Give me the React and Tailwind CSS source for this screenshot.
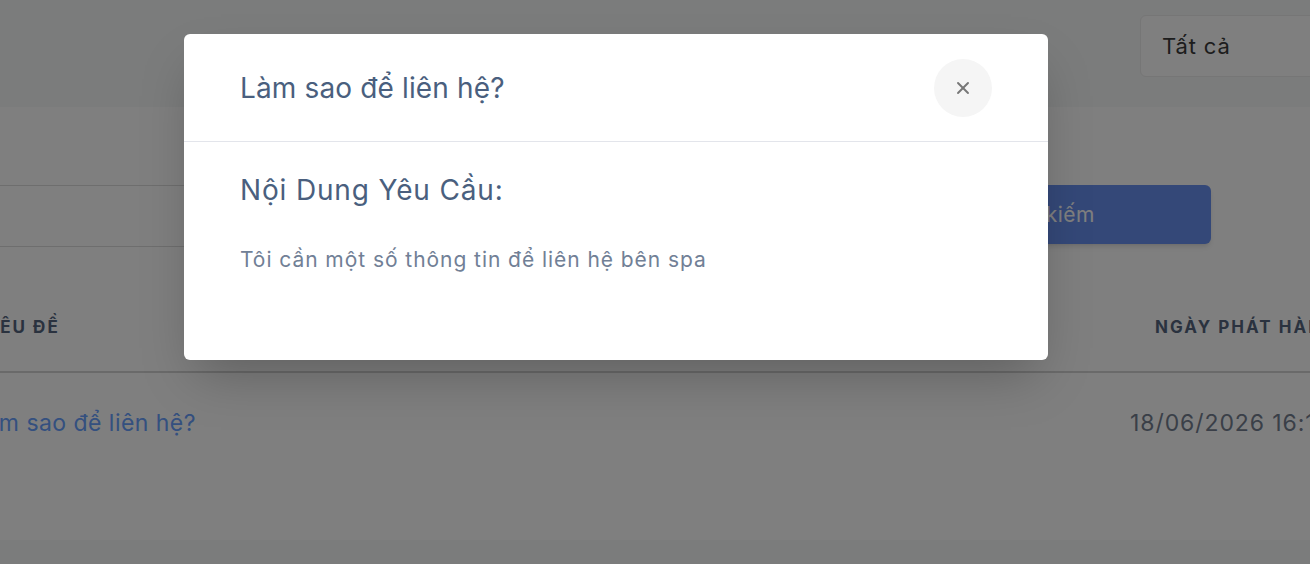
import { X } from 'lucide-react';

const FONT = "font-['Inter','Noto_Sans',sans-serif]";

export default function App() {
  return (
    <div className={`relative h-[564px] overflow-hidden bg-[#f6f8f8] ${FONT}`}>
      {/* thanh lọc phía trên */}
      <div className="flex h-[107px] justify-end pt-[15px]">
        <div className="-mr-[60px] flex h-[62px] w-[230px] items-center rounded-md border border-[#ececec] bg-white px-[21px] text-[22px] tracking-[0.04em] text-[#3a3a3a]">
          Tất cả
        </div>
      </div>

      {/* thẻ nội dung */}
      <div className="h-[433px] bg-white">
        <div className="flex gap-4 pr-[99px] pt-[78px]">
          <div className="-ml-2 h-[62px] flex-1 rounded-md border border-[#dcdcdc]" />
          <button className="h-[59px] w-[326px] rounded-md bg-[#6890f0] text-[21px] tracking-[0.02em] text-white shadow-md">
            Tìm kiếm
          </button>
        </div>

        <div className="-mr-[100px] -ml-[24px]">
          <div className="flex h-[126px] items-end border-b-2 border-[#d4d4d4] pb-[35px] text-[17px] font-bold uppercase leading-[18px] tracking-[0.12em] text-[#55657f]">
            <div className="flex-1 pl-[4px]">Tiêu đề</div>
            <div className="w-[280px] shrink-0 pl-[25px]">Ngày phát hành</div>
          </div>
          <div className="flex pt-[36px] text-[23px] leading-[28px] tracking-[0.02em]">
            <div className="-ml-[4px] flex-1 text-[#68a0ff]">Làm sao để liên hệ?</div>
            <div className="w-[280px] shrink-0 tracking-[0.04em] text-[#747e90]">18/06/2026 16:10</div>
          </div>
        </div>
      </div>

      {/* lớp phủ */}
      <div className="absolute inset-0 bg-black/50" />

      {/* hộp thoại */}
      <div className="absolute left-[184px] top-[34px] w-[864px] rounded-md bg-white shadow-2xl">
        <div className="flex h-[108px] items-center justify-between border-b border-[#e3e5eb] px-14">
          <h2 className="text-[28px] leading-[32px] tracking-[0.005em] text-[#4a5f7e]">Làm sao để liên hệ?</h2>
          <button className="grid h-[58px] w-[58px] place-items-center rounded-full bg-[#f5f5f5] text-[#777]">
            <X size={20} strokeWidth={2.25} />
          </button>
        </div>
        <div className="px-14 pb-[88px] pt-[32px]">
          <h3 className="text-[28px] leading-[32px] tracking-[0.03em] text-[#4a5f7e]">Nội Dung Yêu Cầu:</h3>
          <p className="mt-[42px] text-[21px] leading-[24px] tracking-[0.045em] text-[#718096]">
            Tôi cần một số thông tin để liên hệ bên spa
          </p>
        </div>
      </div>
    </div>
  );
}
